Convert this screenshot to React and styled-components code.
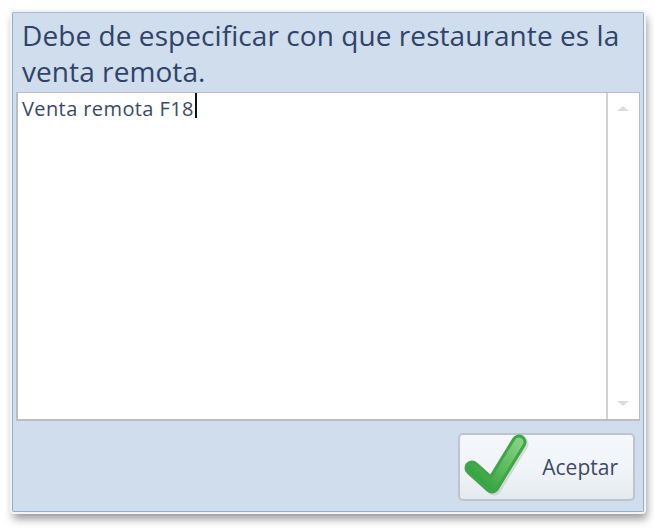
import React from 'react';
import styled, { createGlobalStyle } from 'styled-components';

const GlobalStyle = createGlobalStyle`
    html, body {
        margin: 0;
        padding: 0;
        background: #ffffff;
    }
`;

const Page = styled.div`
    width: 654px;
    height: 532px;
    padding: 12px 0 0 12px;
    box-sizing: border-box;
    overflow: hidden;
    background: #ffffff;
`;

const Dialog = styled.div`
    width: 632px;
    height: 500px;
    box-sizing: border-box;
    display: flex;
    flex-direction: column;
    padding: 0 3px 0 3px;
    background: #cfdded;
    border: 1.5px solid #94adcf;
    border-top-color: #a9b9cf;
    border-radius: 2px;
    box-shadow: 0 0 0 2px #f2f3f4, 2px 6px 8px 1px rgba(70, 70, 70, 0.55);
`;

const Message = styled.div`
    height: 79px;
    flex: none;
    padding: 4px 0 0 6px;
    box-sizing: border-box;
    font-family: "Open Sans", "Noto Sans", sans-serif;
    font-size: 28px;
    line-height: 36px;
    letter-spacing: 0.07px;
    color: #2f4468;
`;

const Memo = styled.div`
    height: 329px;
    flex: none;
    display: flex;
    background: #ffffff;
    border: 2px solid #bdbdbd;
    border-right-width: 1px;
    border-top-width: 1.5px;
    box-sizing: border-box;
`;

const MemoText = styled.div`
    flex: 1;
    padding: 3px 0 0 4px;
    font-family: "Open Sans", "Noto Sans", sans-serif;
    font-size: 20px;
    line-height: 26px;
    letter-spacing: 0.4px;
    color: #3a4a66;
`;

const Caret = styled.span`
    display: inline-block;
    width: 2px;
    height: 25px;
    margin: -3px 0 0 1px;
    background: #111111;
    vertical-align: top;
`;

const ScrollBar = styled.div`
    width: 33px;
    flex: none;
    display: flex;
    flex-direction: column;
    align-items: center;
    justify-content: space-between;
    padding: 13px 2px 13px 0;
    box-sizing: border-box;
    border-left: 2px solid #d2d2d2;
`;

const Arrow = styled.span`
    width: 0;
    height: 0;
    border-left: 6px solid transparent;
    border-right: 6px solid transparent;
    ${({ $down }) => ($down
        ? 'border-top: 5px solid #dcdcdc;'
        : 'border-bottom: 5px solid #dcdcdc;')}
`;

const Footer = styled.div`
    flex: 1;
    display: flex;
    justify-content: flex-end;
    align-items: flex-start;
    padding: 12px 5px 0 0;
`;

const AcceptButton = styled.button`
    width: 177px;
    height: 68px;
    box-sizing: border-box;
    padding: 0 15px 0 0;
    display: flex;
    align-items: center;
    justify-content: flex-end;
    position: relative;
    background: linear-gradient(#f5f8fb, #f0f4f8 55%, #e5eaef);
    border: 2px solid #bcc4ce;
    border-radius: 5px;
    font-family: "Open Sans", "Noto Sans", sans-serif;
    font-size: 21px;
    color: #3b4a66;
`;

const CheckIcon = styled.svg`
    position: absolute;
    left: 4px;
    top: -6px;
    width: 70px;
    height: 66px;
    overflow: visible;
`;

const CHECK_PATH = 'M8 39 L28 57 L55 13';

const Check = () => (
    <CheckIcon viewBox="0 0 70 66">
        <defs>
            <linearGradient id="checkFill" x1="0" y1="1" x2="1" y2="0">
                <stop offset="0" stopColor="#2a9a38" />
                <stop offset="0.55" stopColor="#5cbc5e" />
                <stop offset="1" stopColor="#84d083" />
            </linearGradient>
        </defs>
        <path
            d={CHECK_PATH}
            fill="none"
            stroke="#a9b3ad"
            strokeOpacity="0.4"
            strokeWidth="15"
            strokeLinecap="round"
            strokeLinejoin="round"
            transform="translate(2 2)"
        />
        <path
            d={CHECK_PATH}
            fill="none"
            stroke="#3fa548"
            strokeWidth="15"
            strokeLinecap="round"
            strokeLinejoin="round"
        />
        <path
            d={CHECK_PATH}
            fill="none"
            stroke="url(#checkFill)"
            strokeWidth="9"
            strokeLinecap="round"
            strokeLinejoin="round"
        />
    </CheckIcon>
);

const App = () => {
    return (
        <Page>
            <GlobalStyle />
            <Dialog>
                <Message>Debe de especificar con que restaurante es la venta remota.</Message>
                <Memo>
                    <MemoText>Venta remota F18<Caret /></MemoText>
                    <ScrollBar>
                        <Arrow />
                        <Arrow $down />
                    </ScrollBar>
                </Memo>
                <Footer>
                    <AcceptButton type="button">
                        <Check />
                        Aceptar
                    </AcceptButton>
                </Footer>
            </Dialog>
        </Page>
    );
}

export default App;
